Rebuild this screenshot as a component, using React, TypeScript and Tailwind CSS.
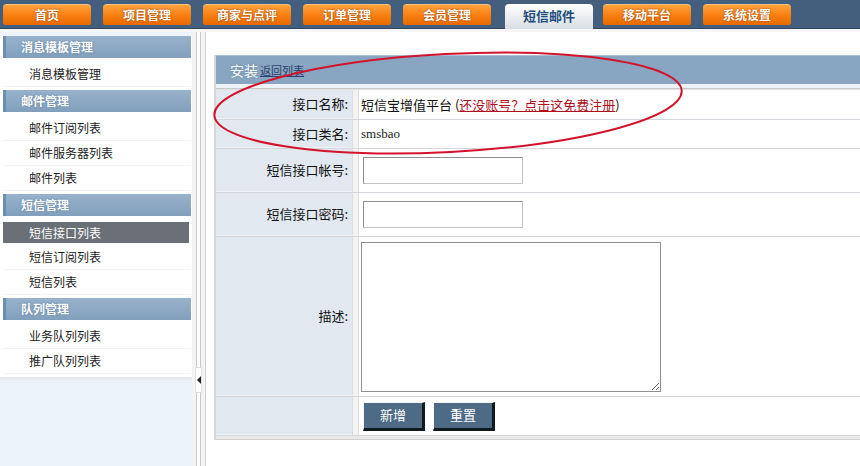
import React from 'react';

// ─── Data ─────────────────────────────────────────────────────────────────────

const TABS = ['首页', '项目管理', '商家与点评', '订单管理', '会员管理', '短信邮件', '移动平台', '系统设置'];
const ACTIVE_TAB = '短信邮件';

const MENU = [
    { title: '消息模板管理', items: ['消息模板管理'] },
    { title: '邮件管理', items: ['邮件订阅列表', '邮件服务器列表', '邮件列表'] },
    { title: '短信管理', items: ['短信接口列表', '短信订阅列表', '短信列表'] },
    { title: '队列管理', items: ['业务队列列表', '推广队列列表'] },
];
const ACTIVE_ITEM = '短信接口列表';

const FONT = '"Noto Sans CJK SC", "Liberation Sans", sans-serif';

// ─── Pieces ───────────────────────────────────────────────────────────────────

function TopNav() {
    return (
        <div className="h-[29px] bg-[#435f7d] flex items-start gap-[12px] pl-[3px] pt-[4px] border-b border-[#2f4760]">
            {TABS.map((t) =>
                t === ACTIVE_TAB ? (
                    <div
                        key={t}
                        className="w-[88px] h-[25px] ml-[2px] -mr-[2px] rounded-t-[4px] bg-gradient-to-b from-white to-[#d9dee4] flex items-center justify-center text-[13px] font-bold text-[#1d4d7c] pb-[2px]"
                    >
                        {t}
                    </div>
                ) : (
                    <div
                        key={t}
                        className="w-[88px] h-[21px] rounded-t-[4px] rounded-b-[2px] bg-gradient-to-b from-[#ffa33a] via-[#f97f10] to-[#e86a00] border-t border-[#ffc27a] flex items-center justify-center text-[12px] font-bold text-white [text-shadow:0_0_2px_#8a3a00]"
                    >
                        {t}
                    </div>
                )
            )}
        </div>
    );
}

function Sidebar() {
    return (
        <div className="w-[192px] shrink-0 bg-[#edf3fa] pt-[4px]">
            <div className="bg-white pl-[3px] pr-[1px] pb-[3px] border-b-[3px] border-[#e6eaee]">
                {MENU.map((sec, i) => (
                    <div key={sec.title} className={i > 0 ? 'mt-[3px]' : ''}>
                        <div className="h-[22px] bg-gradient-to-b from-[#98b2cb] to-[#819fbd] border-l-[3px] border-[#6f8eab] flex items-center pl-[15px] text-[12px] font-bold text-white [text-shadow:0_0_2px_#5d7a98]">
                            {sec.title}
                        </div>
                        <div className="mt-[4px]">
                            {sec.items.map((it) =>
                                it === ACTIVE_ITEM ? (
                                    <div key={it} className="h-[25px] py-[2px] pr-[2px]">
                                        <div className="h-full bg-[#6b6f76] flex items-center pl-[26px] text-[12px] text-white">
                                            {it}
                                        </div>
                                    </div>
                                ) : (
                                    <div
                                        key={it}
                                        className="h-[25px] flex items-center pl-[26px] text-[12px] text-[#222] border-b border-[#f6f3ee]"
                                    >
                                        {it}
                                    </div>
                                )
                            )}
                        </div>
                    </div>
                ))}
            </div>
        </div>
    );
}

function Splitter() {
    return (
        <div className="w-[13px] shrink-0 bg-[#f4f4f4] flex justify-center">
            <div className="w-[5px] h-full border-x border-[#c9c9c9] bg-white flex flex-col items-center pt-[335px]">
                <div className="w-[7px] h-[26px] bg-white border border-[#dedede] flex items-center justify-center">
                    <div className="w-0 h-0 border-y-[4px] border-y-transparent border-r-[4px] border-r-[#222]" />
                </div>
            </div>
        </div>
    );
}

function Row({ label, h, children }: { label: string; h: string; children?: React.ReactNode }) {
    return (
        <div className={`flex ${h} border-b border-[#d3d7dc]`}>
            <div className="w-[136px] shrink-0 bg-[#e1e8f0] flex items-center justify-end pr-[4px] text-[13px] text-[#111] border-b border-[#eef1f5]">
                {label}
            </div>
            <div className="w-[7px] shrink-0 bg-[#f3f3f3] border-x border-[#dcdcdc]" />
            <div className="flex-1 flex items-center pl-[2px] bg-white">{children}</div>
        </div>
    );
}

function Main() {
    return (
        <div className="flex-1 bg-white border-l border-[#cfcfcf] pl-[8px] pt-[23px]">
            <div className="border-l-2 border-[#d6d6d6]">
                <div className="h-[29px] bg-[#88a6c1] border-t border-[#a9c0d4] flex items-center pl-[14px]">
                    <span className="text-[14px] text-white [text-shadow:0_0_2px_#5f7c98]">安装</span>
                    <span className="text-[11px] text-[#2f3f70] underline ml-[2px]">返回列表</span>
                </div>
                <div className="h-[5px] bg-[#eef3f7] border-b border-[#c9c9c9]" />
                <div className="border-t border-[#e2e2e2]">
                    <Row label="接口名称:" h="h-[30px]">
                        <span className="text-[13px] text-[#111]">
                            短信宝增值平台 (
                            <span className="text-[#b0101c] underline">还没账号？点击这免费注册</span>)
                        </span>
                    </Row>
                    <Row label="接口类名:" h="h-[29px]">
                        <span className="text-[13px] text-[#222] font-['Liberation_Serif',serif]">smsbao</span>
                    </Row>
                    <Row label="短信接口帐号:" h="h-[44px]">
                        <input className="ml-[2px] w-[160px] h-[27px] border border-[#8f8f8f] border-b-[#c4c4c4] border-r-[#c4c4c4] bg-white outline-none" />
                    </Row>
                    <Row label="短信接口密码:" h="h-[44px]">
                        <input className="ml-[2px] w-[160px] h-[27px] border border-[#8f8f8f] border-b-[#c4c4c4] border-r-[#c4c4c4] bg-white outline-none" />
                    </Row>
                    <Row label="描述:" h="h-[160px]">
                        <textarea className="w-[300px] h-[150px] border border-[#8f8f8f] bg-white outline-none resize" />
                    </Row>
                    <Row label="" h="h-[39px]">
                        <div className="flex gap-[8px] ml-[2px]">
                            <button className="w-[62px] h-[29px] bg-[#4d6b85] text-white text-[13px] border border-[#f4f4f4] border-b-[3px] border-r-[3px] border-b-[#101820] border-r-[#101820]">
                                新增
                            </button>
                            <button className="w-[62px] h-[29px] bg-[#4d6b85] text-white text-[13px] border border-[#f4f4f4] border-b-[3px] border-r-[3px] border-b-[#101820] border-r-[#101820]">
                                重置
                            </button>
                        </div>
                    </Row>
                    <div className="h-[4px] bg-[#e9e9e9] border-b border-[#cfcfcf]" />
                </div>
            </div>
        </div>
    );
}

// ─── Page ─────────────────────────────────────────────────────────────────────

export default function App() {
    return (
        <div className="relative w-[860px] h-[466px] overflow-hidden bg-white" style={{ fontFamily: FONT }}>
            <TopNav />
            <div className="h-[3px] bg-[#f6f6f6]" />
            <div className="flex h-[434px]">
                <Sidebar />
                <Splitter />
                <Main />
            </div>

            {/* hand-drawn highlight */}
            <svg className="absolute inset-0 pointer-events-none" width="860" height="466">
                <ellipse
                    cx="448"
                    cy="103"
                    rx="234"
                    ry="49"
                    transform="rotate(-3 448 103)"
                    fill="none"
                    stroke="#d3132c"
                    strokeWidth="2"
                />
            </svg>
        </div>
    );
}
